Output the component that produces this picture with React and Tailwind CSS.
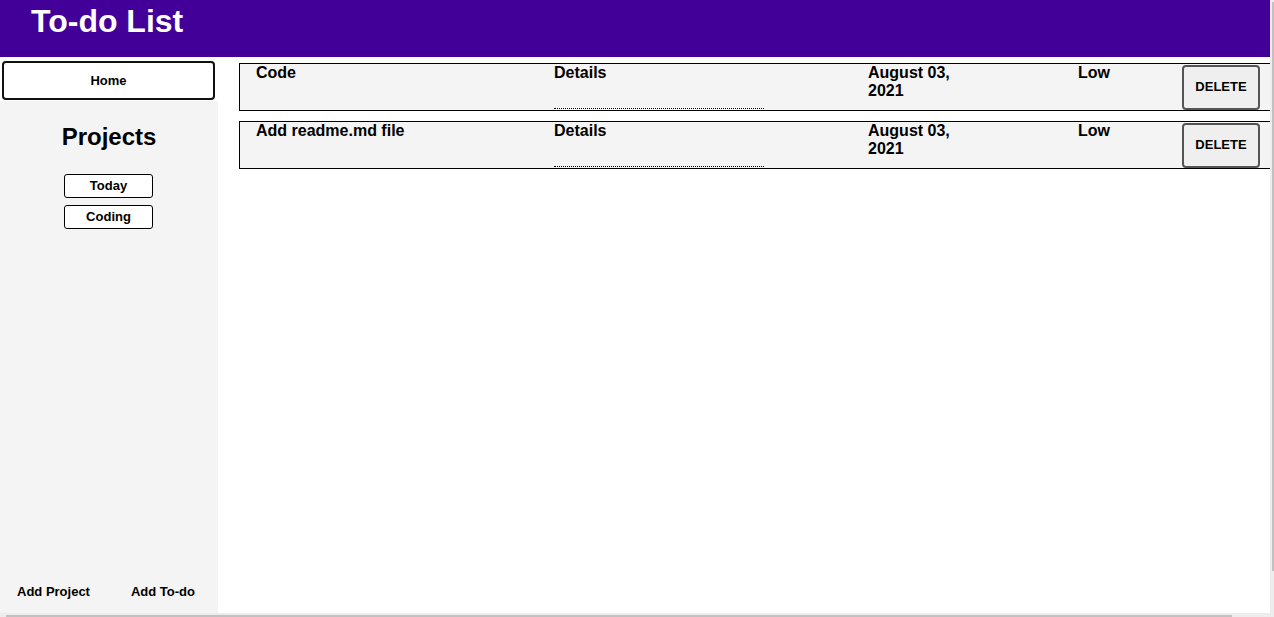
import React from "react";

const todos = [
  { title: "Code", date: "August 03, 2021", priority: "Low" },
  { title: "Add readme.md file", date: "August 03, 2021", priority: "Low" },
];

const projects = ["Today", "Coding"];

const TodoRow = ({ todo }) => (
  <div className="flex h-[48px] w-[1060px] shrink-0 border-y border-l border-black bg-[#f4f4f4] text-[16px] font-bold leading-[18px] text-black">
    <div className="w-[314px] pl-[16px]">{todo.title}</div>
    <div className="w-[210px] self-stretch border-b border-dotted border-black mb-[1px]">
      Details
    </div>
    <div className="w-[104px]" />
    <div className="w-[100px]">{todo.date}</div>
    <div className="w-[110px]" />
    <div className="w-[104px]">{todo.priority}</div>
    <button className="my-auto h-[45px] w-[78px] rounded-[4px] border-2 border-[#555] bg-[#efefef] text-[13px] font-bold">
      DELETE
    </button>
  </div>
);

const App = () => {
  return (
    <div className="flex h-[617px] w-[1274px] flex-col overflow-hidden bg-white font-['Liberation_Sans',Arial,sans-serif]">
      <div className="flex min-h-0 flex-1">
        <div className="flex min-w-0 flex-1 flex-col">
          {/* Header */}
          <header className="h-[57px] shrink-0 bg-[#420099] pl-[31px] pt-[3px]">
            <h1 className="text-[32px] font-bold leading-[37px] text-white">To-do List</h1>
          </header>

          <div className="flex min-h-0 flex-1">
            {/* Sidebar */}
            <aside className="flex w-[218px] shrink-0 flex-col">
              <div className="bg-white pt-[4px] pb-[1px] pl-[2px] pr-[3px]">
                <button className="h-[39px] w-full rounded-[4px] border-2 border-[#111] bg-white text-[13px] font-bold">
                  Home
                </button>
              </div>
              <div className="flex flex-1 flex-col items-center bg-[#f4f4f4]">
                <h2 className="mt-[22px] text-[24px] font-bold leading-[28px]">Projects</h2>
                <div className="mt-[23px] mr-[1px] flex flex-col gap-[7px]">
                  {projects.map((p) => (
                    <button
                      key={p}
                      className="h-[24px] w-[89px] rounded-[3px] border border-black bg-white text-[13px] font-bold"
                    >
                      {p}
                    </button>
                  ))}
                </div>
                <div className="mt-auto mb-[12px] flex w-full text-[13px] font-bold">
                  <span className="pl-[17px]">Add Project</span>
                  <span className="pl-[41px]">Add To-do</span>
                </div>
              </div>
            </aside>

            {/* Todo list */}
            <main className="flex flex-1 flex-col gap-[10px] overflow-hidden pt-[6px] pl-[21px]">
              {todos.map((t) => (
                <TodoRow key={t.title} todo={t} />
              ))}
            </main>
          </div>
        </div>

        {/* vertical scrollbar */}
        <div className="flex w-[4px] shrink-0 justify-end bg-[#ededed]">
          <div className="mt-[2px] h-[569px] w-[2px] bg-[#c1c1c1]" />
        </div>
      </div>

      {/* horizontal scrollbar */}
      <div className="flex h-[4px] shrink-0 items-end bg-[#ededed]">
        <div className="ml-[6px] h-[2px] w-[1226px] bg-[#c1c1c1]" />
      </div>
    </div>
  );
};

export default App;
